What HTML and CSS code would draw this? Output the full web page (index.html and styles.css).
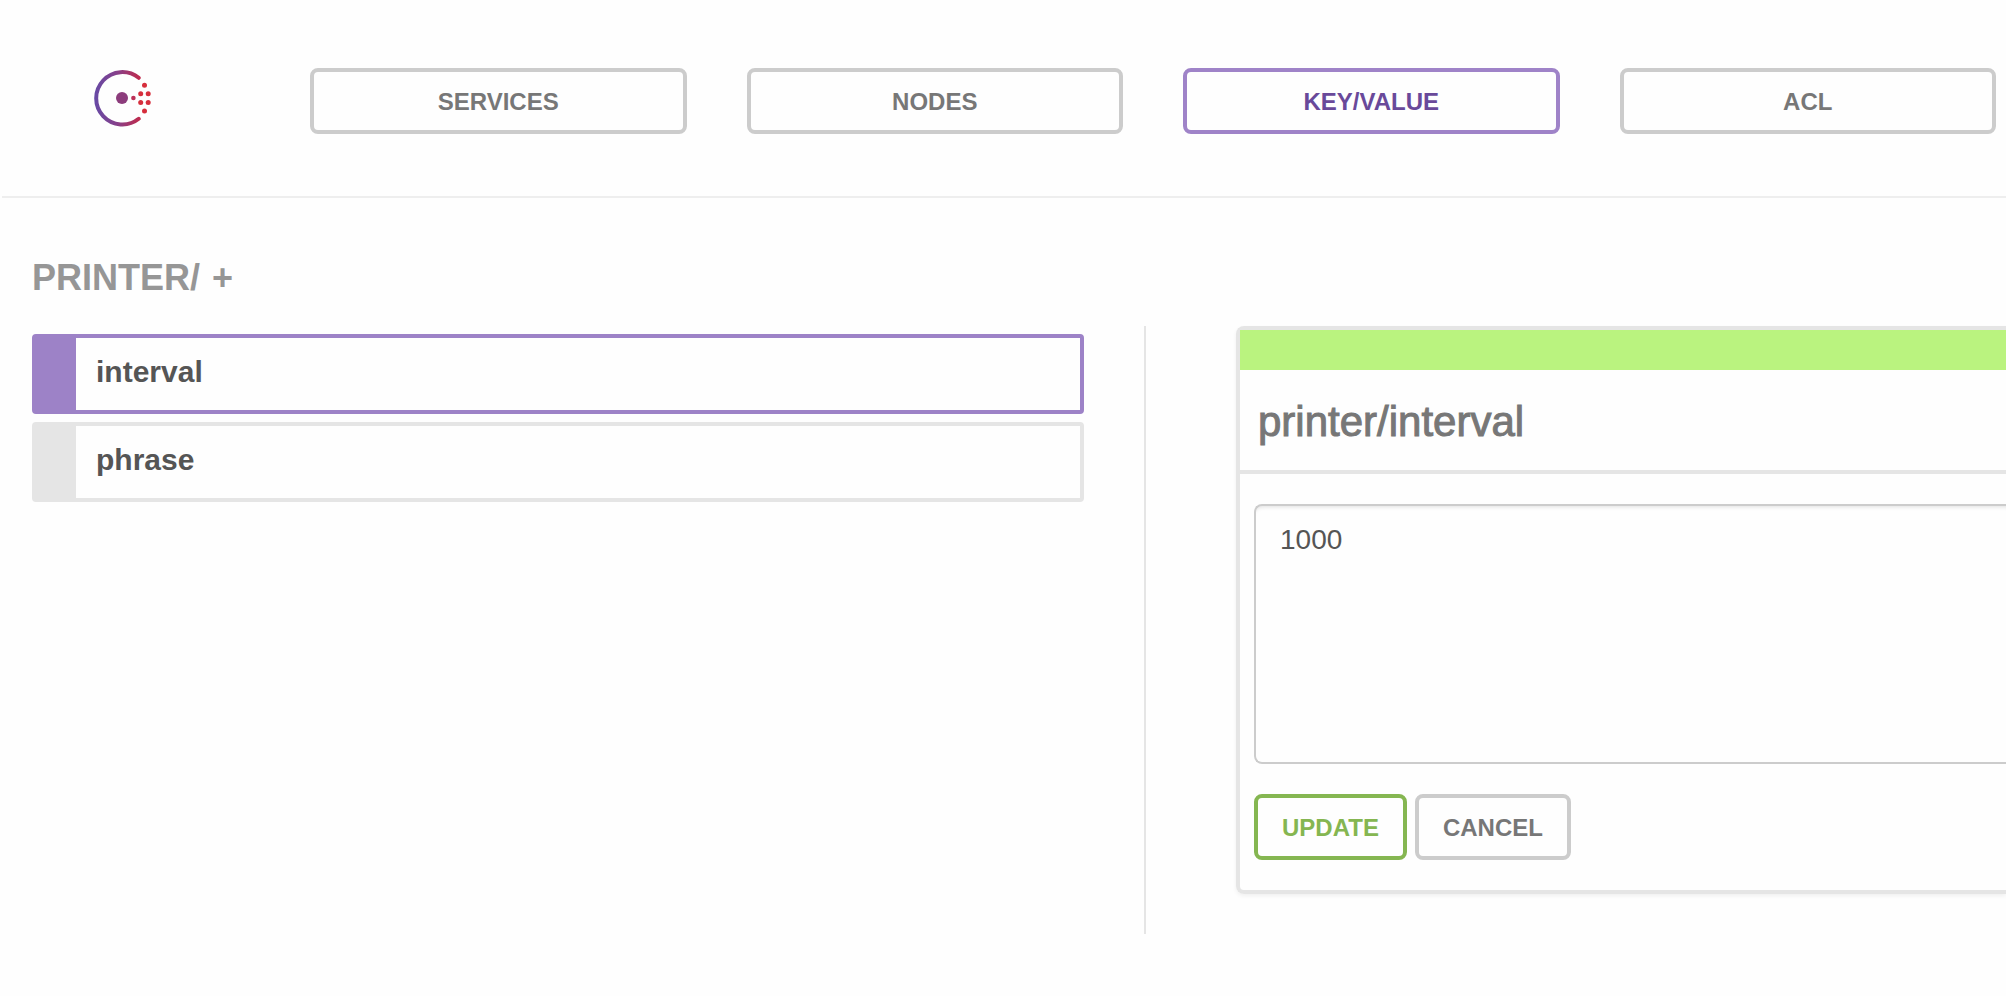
FILE: index.html
```html
<!DOCTYPE html>
<html lang="en">
<head>
<meta charset="utf-8">
<title>Consul</title>
<link rel="stylesheet" href="styles.css">
</head>
<body>
<header class="topbar">
  <a class="logo" href="#" aria-label="Consul">
    <svg viewBox="0 0 60 58" width="60" height="58" aria-hidden="true">
      <defs>
        <linearGradient id="ring" gradientUnits="userSpaceOnUse" x1="0" y1="0" x2="46" y2="0">
          <stop offset="0" stop-color="#664aa6"/>
          <stop offset="0.5" stop-color="#86408a"/>
          <stop offset="1" stop-color="#c02a4c"/>
        </linearGradient>
      </defs>
      <path d="M44.7 7.8A26.2 26.2 0 1 0 44.7 48.8" fill="none" stroke="url(#ring)" stroke-width="4" stroke-linecap="round"/>
      <circle cx="28" cy="28" r="6" fill="#8c3c7c"/>
      <circle cx="39.4" cy="28" r="2.3" fill="#bc3058"/>
      <g fill="#d62e3c">
        <circle cx="46.7" cy="23.7" r="2.5"/>
        <circle cx="54.2" cy="23.7" r="2.5"/>
        <circle cx="46.7" cy="32.5" r="2.5"/>
        <circle cx="54.2" cy="32.5" r="2.5"/>
        <circle cx="50.5" cy="15.2" r="2.5"/>
        <circle cx="50.5" cy="41" r="2.5"/>
      </g>
    </svg>
  </a>
  <nav class="tabs">
    <a class="btn" href="#">SERVICES</a>
    <a class="btn" href="#">NODES</a>
    <a class="btn btn-active" href="#" aria-current="page">KEY/VALUE</a>
    <a class="btn" href="#">ACL</a>
  </nav>
</header>
<main class="content">
  <h1 class="crumbs"><a href="#">PRINTER/</a><a href="#" aria-label="Create key">+</a></h1>
  <div class="columns">
    <ul class="keys">
      <li><a class="key key-active" href="#">interval</a></li>
      <li><a class="key" href="#">phrase</a></li>
    </ul>
    <div class="detail">
      <form class="panel">
        <div class="status"></div>
        <h2 class="title"><label for="value">printer/interval</label></h2>
        <div class="form-body">
          <textarea class="value" id="value">1000</textarea>
          <div class="actions">
            <button class="btn btn-update" type="button">UPDATE</button>
            <button class="btn" type="button">CANCEL</button>
          </div>
        </div>
      </form>
    </div>
  </div>
</main>
</body>
</html>
```
FILE: styles.css
```css
* {
  box-sizing: border-box;
}

body {
  margin: 0;
  background: #fefefe;
  color: #555;
  font-family: "Liberation Sans", Arial, sans-serif;
}

a {
  color: inherit;
  text-decoration: none;
}

.topbar {
  display: flex;
  align-items: flex-start;
  margin-left: 2px;
  padding: 68px 10px 62px 92px;
  border-bottom: 2px solid #eee;
}

.logo {
  display: block;
  width: 60px;
  padding-top: 2px;
  margin-right: 156px;
}

.logo svg {
  display: block;
}

.tabs {
  flex: 1;
  display: grid;
  grid-template-columns: repeat(4, 1fr);
  gap: 60px;
}

.btn {
  padding: 16px 24px 14px;
  border: 4px solid #ccc;
  border-radius: 8px;
  background: #fefefe;
  color: #777;
  font-family: inherit;
  font-size: 24px;
  font-weight: bold;
  line-height: 28px;
  text-align: center;
}

.btn-active {
  border-color: #9f83c8;
  color: #69499a;
}

.btn-update {
  border-color: #85b651;
  color: #85b651;
}

.crumbs {
  display: flex;
  gap: 12px;
  margin: 0;
  padding: 58px 32px 26px;
  color: #969696;
  font-size: 36px;
  line-height: 44px;
}

.columns {
  display: grid;
  grid-template-columns: 1144fr 862fr;
}

.keys {
  display: flex;
  flex-direction: column;
  gap: 8px;
  margin: 0;
  padding: 8px 60px 0 32px;
  list-style: none;
}

.key {
  display: block;
  padding: 18px 20px 22px;
  border: 4px solid #e5e5e5;
  border-left-width: 44px;
  border-radius: 4px;
  font-size: 30px;
  font-weight: bold;
  line-height: 32px;
}

.key-active {
  border-color: #9d82c7;
}

.detail {
  padding: 0 0 40px 90px;
  border-left: 2px solid #e5e5e5;
}

.panel {
  border: 4px solid #e5e5e5;
  border-right: 0;
  border-radius: 8px 0 0 8px;
  box-shadow: 0 2px 4px rgba(0, 0, 0, 0.06);
}

.status {
  height: 40px;
  background: #baf37f;
}

.title {
  margin: 0;
  padding: 28px 18px 24px;
  border-bottom: 4px solid #e5e5e5;
  color: #777;
  font-size: 42px;
  font-weight: normal;
  line-height: 48px;
  -webkit-text-stroke: 1px #777;
}

.form-body {
  padding: 30px 0 30px 14px;
}

.value {
  display: block;
  width: 100%;
  height: 260px;
  padding: 18px 24px;
  border: 2px solid #ccc;
  border-right: 0;
  border-radius: 8px 0 0 8px;
  background: #fefefe;
  box-shadow: inset 0 5px 4px -4px rgba(0, 0, 0, 0.12);
  color: #555;
  font-family: inherit;
  font-size: 28px;
  line-height: 32px;
  resize: none;
}

.actions {
  display: flex;
  gap: 8px;
  margin-top: 30px;
}
```
